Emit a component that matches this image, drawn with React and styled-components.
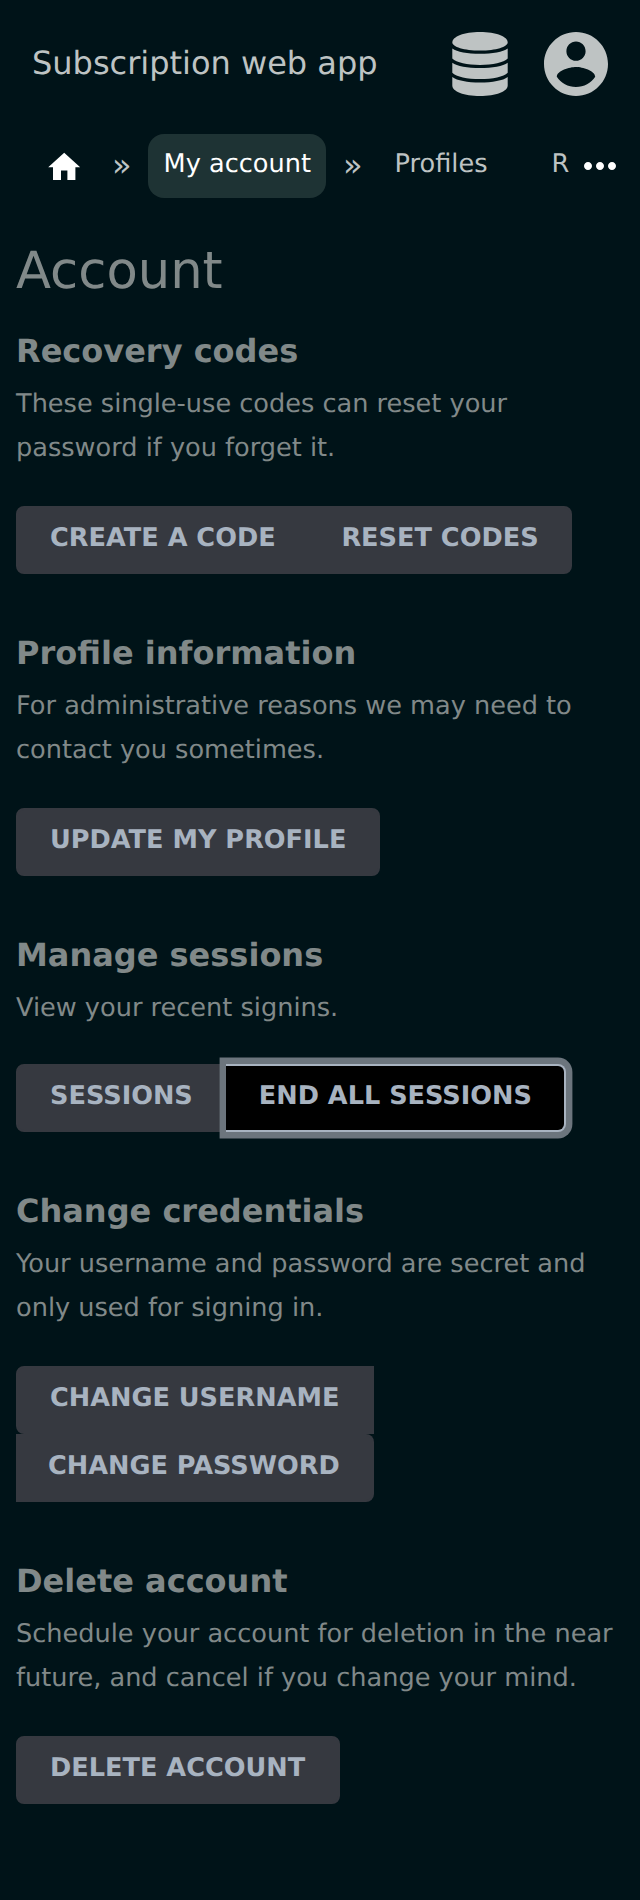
import React from "react";
import styled, { createGlobalStyle, css } from "styled-components";

const GlobalStyle = createGlobalStyle`
  *, *::before, *::after { box-sizing: border-box; }
  body {
    margin: 0;
    background: #001318;
    color: #818989;
    font-family: "DejaVu Sans", sans-serif;
    font-size: 25.6px;
    line-height: 44px;
    text-rendering: geometricPrecision;
  }
`;

const Page = styled.div`
  width: 640px;
  min-height: 1900px;
  overflow: hidden;
`;

const Header = styled.header`
  display: flex;
  align-items: center;
  height: 128px;
  padding: 0 32px;
  color: #bec3c3;
`;

const AppTitle = styled.div`
  flex: 1;
  padding-bottom: 2px;
  font-size: 32px;
  white-space: nowrap;
`;

const HeaderIcons = styled.div`
  display: flex;
  gap: 36px;
`;

const Icon = styled.svg`
  display: block;
  flex: none;
  width: ${(p) => p.$w}px;
  height: ${(p) => p.$h ?? p.$w}px;
  fill: currentColor;
`;

const Breadcrumbs = styled.nav`
  display: flex;
  align-items: flex-start;
  height: 64px;
  margin-top: 6px;
  padding: 0 16px 0 45px;
  color: #bec3c3;
  white-space: nowrap;
`;

const HomeLink = styled.a`
  width: 67px;
  padding-top: 14px;
  color: #fff;
`;

const Separator = styled.span`
  width: ${(p) => p.$width}px;
  padding: 9px 0 0 ${(p) => p.$indent ?? 0}px;
  font-size: 32px;
`;

const Crumb = styled.a`
  width: ${(p) => p.$width}px;
  height: 64px;
  padding: 8px 0 0 15.6px;
  border-radius: 16px;
  ${(p) =>
    p.$current &&
    css`
      background: #1e3334;
      color: #fff;
    `}
`;

const MoreButton = styled.a`
  margin-left: auto;
  padding-top: 8px;
  color: #fff;
`;

const Main = styled.main`
  padding: 43px 16px 0;
`;

const PageTitle = styled.h1`
  margin: 0 0 28px;
  font-size: 51.2px;
  font-weight: 400;
  line-height: 60px;
`;

const Section = styled.section`
  margin-bottom: 57px;
`;

const SectionTitle = styled.h2`
  margin: 0 0 9px;
  font-size: 32px;
  font-weight: 700;
`;

const Description = styled.p`
  margin: 0 0 ${(p) => (p.$short ? 34 : 36)}px;
`;

const ButtonGroup = styled.div`
  display: flex;
  flex-direction: ${(p) => (p.$stacked ? "column" : "row")};
  align-items: flex-start;
`;

const Button = styled.button`
  display: block;
  width: ${(p) => p.$width}px;
  height: 68px;
  margin: 0;
  padding: 0 0 4px 32px;
  border: 2px solid #363940;
  border-radius: 8px;
  background: #363940;
  color: #a8b3c0;
  font: inherit;
  font-weight: 700;
  text-align: left;
  text-rendering: inherit;
  text-transform: uppercase;
  white-space: nowrap;

  ${ButtonGroup} > &:not(:last-child) {
    border-top-right-radius: 0;
    border-bottom-right-radius: 0;
  }
  ${ButtonGroup} > &:not(:first-child) {
    border-left: 0;
    border-top-left-radius: 0;
    border-bottom-left-radius: 0;
  }
  ${(p) =>
    p.$focused &&
    css`
      padding-left: 32.4px;
      border-color: #a8b3c0;
      background: #000;
      box-shadow: 0 0 0 6.4px #6c757d;
    `}
`;

const sections = [
  {
    title: "Recovery codes",
    text: ["These single-use codes can reset your", "password if you forget it."],
    buttons: [
      { label: "Create a code", width: 293.4 },
      { label: "Reset codes", width: 262.6 },
    ],
  },
  {
    title: "Profile information",
    text: ["For administrative reasons we may need to", "contact you sometimes."],
    buttons: [{ label: "Update my profile", width: 364 }],
  },
  {
    title: "Manage sessions",
    text: ["View your recent signins."],
    buttons: [
      { label: "Sessions", width: 210.4 },
      { label: "End all sessions", width: 339.6, focused: true },
    ],
  },
  {
    title: "Change credentials",
    text: ["Your username and password are secret and", "only used for signing in."],
    stacked: true,
    buttons: [
      { label: "Change username", width: 358 },
      { label: "Change password", width: 358 },
    ],
  },
  {
    title: "Delete account",
    text: ["Schedule your account for deletion in the near", "future, and cancel if you change your mind."],
    buttons: [{ label: "Delete account", width: 324 }],
  },
];

export default function App() {
  return (
    <>
      <GlobalStyle />
      <Page>
        <Header>
          <AppTitle>Subscription web app</AppTitle>
          <HeaderIcons>
            <Icon $w={56} $h={64} viewBox="0 0 56 64" aria-label="Data">
              <path d="M0.300 10.500C0.300 4.500 12 0 28 0s27.700 4.500 27.700 10.500C55.700 14.800 44 18.600 28 18.600S0.300 14.800 0.300 10.500Z" />
              <path d="M0.300 16.500C5 20 15.500 21.800 28 21.800s23-1.800 27.700-5.300v10c-4 4-15 6.400-27.700 6.400S4.300 30.500 0.300 26.500Z" />
              <path d="M0.300 30.700C5 34.200 15.500 36 28 36s23-1.800 27.700-5.300v10c-4 4-15 6.400-27.700 6.400S4.300 44.700 0.300 40.700Z" />
              <path d="M0.300 45C5 48.600 15.500 50.500 28 50.500S51 48.600 55.700 45v8.500C55.700 59.500 44 64 28 64S0.300 59.500 0.300 53.500Z" />
            </Icon>
            <Icon $w={64} viewBox="2 2 20 20" aria-label="Account">
              <path d="M12 2C6.480 2 2 6.480 2 12s4.480 10 10 10 10-4.480 10-10S17.520 2 12 2zm0 3c1.660 0 3 1.340 3 3s-1.340 3-3 3-3-1.340-3-3 1.340-3 3-3zm0 14.200c-2.500 0-4.710-1.280-6-3.220.030-1.990 4-3.080 6-3.080 1.990 0 5.970 1.090 6 3.080-1.290 1.940-3.500 3.220-6 3.220z" />
            </Icon>
          </HeaderIcons>
        </Header>
        <Breadcrumbs>
          <HomeLink>
            <Icon $w={38.4} viewBox="0 0 24 24" aria-label="Home">
              <path d="M10 20v-6h4v6h5v-8h3L12 3 2 12h3v8z" />
            </Icon>
          </HomeLink>
          <Separator $width={36}>»</Separator>
          <Crumb $width={178} $current>My account</Crumb>
          <Separator $width={53} $indent={17}>»</Separator>
          <Crumb $width={157}>Profiles</Crumb>
          <Crumb $width={40}>R</Crumb>
          <MoreButton>
            <Icon $w={48} viewBox="0 0 24 24" aria-label="More">
              <path d="M6 10c-1.100 0-2 .9-2 2s.9 2 2 2 2-.9 2-2-.9-2-2-2zm12 0c-1.100 0-2 .9-2 2s.9 2 2 2 2-.9 2-2-.9-2-2-2zm-6 0c-1.100 0-2 .9-2 2s.9 2 2 2 2-.9 2-2-.9-2-2-2z" />
            </Icon>
          </MoreButton>
        </Breadcrumbs>
        <Main>
          <PageTitle>Account</PageTitle>
          {sections.map((s) => (
            <Section key={s.title}>
              <SectionTitle>{s.title}</SectionTitle>
              <Description $short={s.text.length === 1}>
                {s.text.map((line, i) => (
                  <React.Fragment key={line}>
                    {i > 0 && <br />}
                    {line}
                  </React.Fragment>
                ))}
              </Description>
              <ButtonGroup $stacked={s.stacked}>
                {s.buttons.map((b) => (
                  <Button key={b.label} $width={b.width} $focused={b.focused}>
                    {b.label}
                  </Button>
                ))}
              </ButtonGroup>
            </Section>
          ))}
        </Main>
      </Page>
    </>
  );
}
